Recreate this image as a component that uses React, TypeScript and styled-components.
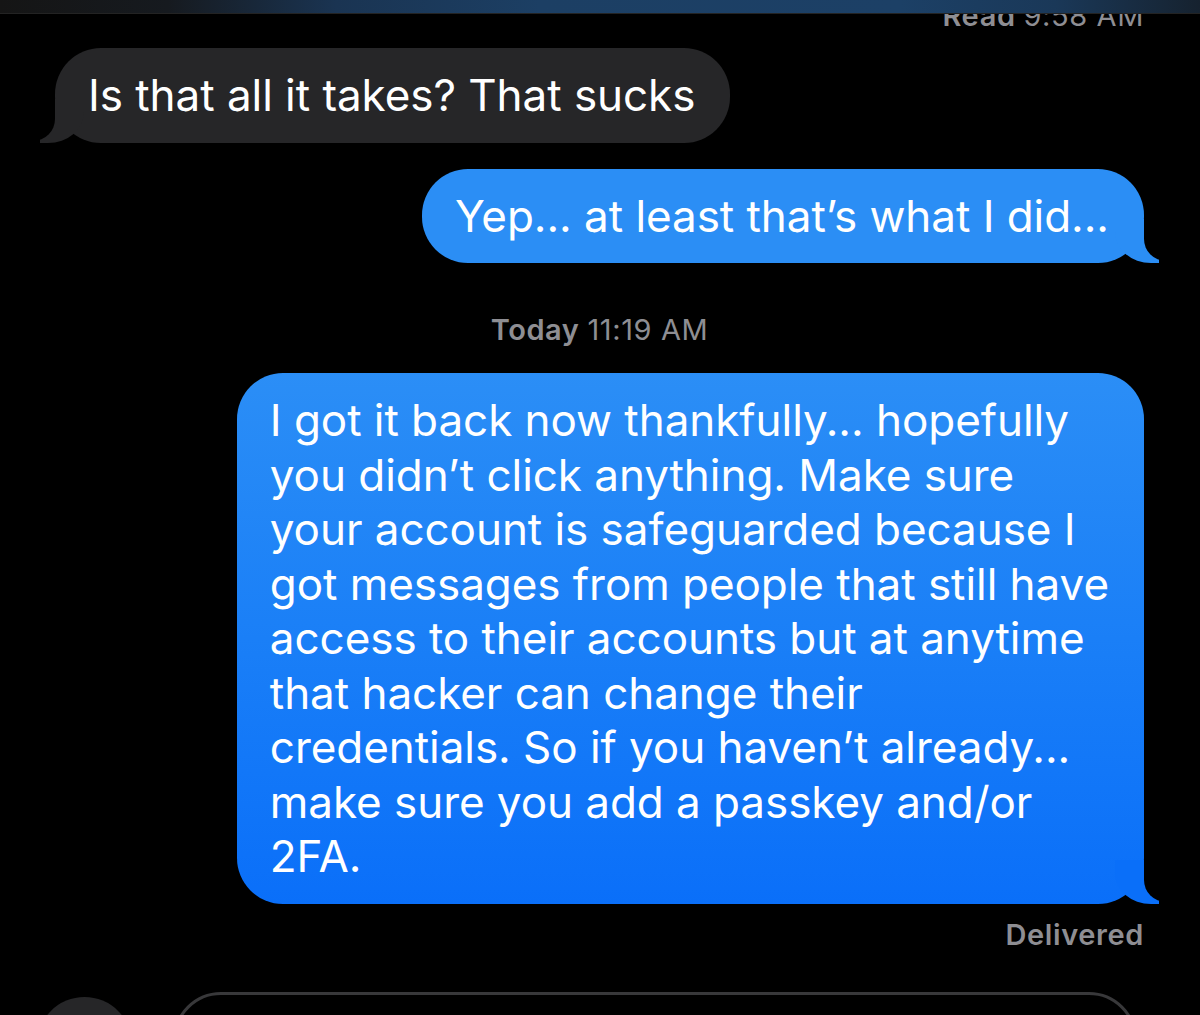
import styled, { createGlobalStyle } from "styled-components";

const GlobalStyle = createGlobalStyle`
  html, body {
    margin: 0;
    padding: 0;
    background: #000;
  }
  body {
    font-family: Inter, "Noto Sans", sans-serif;
    -webkit-font-smoothing: antialiased;
  }
`;

const Screen = styled.div`
  position: relative;
  width: 1200px;
  height: 1015px;
  overflow: hidden;
  background: #000;
  display: flex;
  flex-direction: column;
`;

// blurred nav bar edge that sits over the scrolled thread
const TopBar = styled.div`
  position: absolute;
  top: 0;
  left: 0;
  right: 0;
  height: 13px;
  z-index: 2;
  background: linear-gradient(
    90deg,
    #151515 0%,
    #161a1f 14%,
    #1a3452 28%,
    #1c3f64 45%,
    #1c4066 75%,
    #1a3858 88%,
    #16222f 100%
  );
  border-bottom: 1px solid #232323;
`;

const Thread = styled.div`
  display: flex;
  flex-direction: column;
  padding: 0 56px 0 55px;
`;

const Status = styled.div<{ $top: number }>`
  align-self: flex-end;
  margin-top: ${(p) => p.$top}px;
  font-size: 29px;
  line-height: 34px;
  font-weight: 600;
  color: #8e8e93;
  letter-spacing: 0.6px;
`;

const Light = styled.span`
  font-weight: 400;
`;

const Stamp = styled.div`
  align-self: center;
  margin-top: 50px;
  font-size: 29px;
  line-height: 34px;
  font-weight: 600;
  color: #8e8e93;
  letter-spacing: 0.6px;
`;

const Bubble = styled.div<{ $sent?: boolean; $bg: string; $tail: string; $top: number }>`
  position: relative;
  align-self: ${(p) => (p.$sent ? "flex-end" : "flex-start")};
  margin-top: ${(p) => p.$top}px;
  padding: 20px 35px 20px 33px;
  border-radius: 46px;
  background: ${(p) => p.$bg};
  color: #fff;
  font-size: 44px;
  line-height: 54.5px;
  font-weight: 400;
  letter-spacing: -0.05px;
  white-space: nowrap;

  &::before,
  &::after {
    content: "";
    position: absolute;
    bottom: 0;
    height: 44px;
  }

  &::before {
    width: 44px;
    background: ${(p) => p.$tail};
    ${(p) =>
      p.$sent
        ? "right: -15px; border-bottom-left-radius: 36px 31px;"
        : "left: -15px; border-bottom-right-radius: 36px 31px;"}
  }

  &::after {
    width: 27px;
    bottom: 2px;
    background: #000;
    ${(p) =>
      p.$sent
        ? "right: -27px; border-bottom-left-radius: 22px;"
        : "left: -27px; border-bottom-right-radius: 22px;"}
  }
`;

const Composer = styled.div`
  display: flex;
  align-items: flex-start;
  gap: 41px;
  margin-top: 40px;
  padding-left: 37px;
`;

const PlusButton = styled.div`
  flex: none;
  width: 95px;
  height: 95px;
  margin-top: 5px;
  border-radius: 50%;
  background: #262628;
`;

const Field = styled.div`
  width: 964px;
  height: 96px;
  box-sizing: border-box;
  border: 3px solid #38383a;
  border-radius: 50px;
`;

const longMessage = [
  "I got it back now thankfully... hopefully",
  "you didn’t click anything. Make sure",
  "your account is safeguarded because I",
  "got messages from people that still have",
  "access to their accounts but at anytime",
  "that hacker can change their",
  "credentials. So if you haven’t already...",
  "make sure you add a passkey and/or",
  "2FA.",
];

export default function App() {
  return (
    <>
      <GlobalStyle />
      <Screen>
        <TopBar />
        <Thread>
          <Status $top={-1}>
            Read <Light>9:58 AM</Light>
          </Status>
          <Bubble $bg="#262628" $tail="#262628" $top={15}>
            Is that all it takes? That sucks
          </Bubble>
          <Bubble $sent $bg="#2b8ef5" $tail="#2b8ef5" $top={26}>
            Yep... at least that’s what I did...
          </Bubble>
          <Stamp>
            Today <Light>11:19 AM</Light>
          </Stamp>
          <Bubble
            $sent
            $bg="linear-gradient(180deg, #2b8ef6 0%, #1a7ff7 50%, #0a6ff9 100%)"
            $tail="#0a6ff9"
            $top={26}
          >
            {longMessage.map((line, i) => (
              <div key={i}>{line}</div>
            ))}
          </Bubble>
          <Status $top={14}>Delivered</Status>
        </Thread>
        <Composer>
          <PlusButton />
          <Field />
        </Composer>
      </Screen>
    </>
  );
}
